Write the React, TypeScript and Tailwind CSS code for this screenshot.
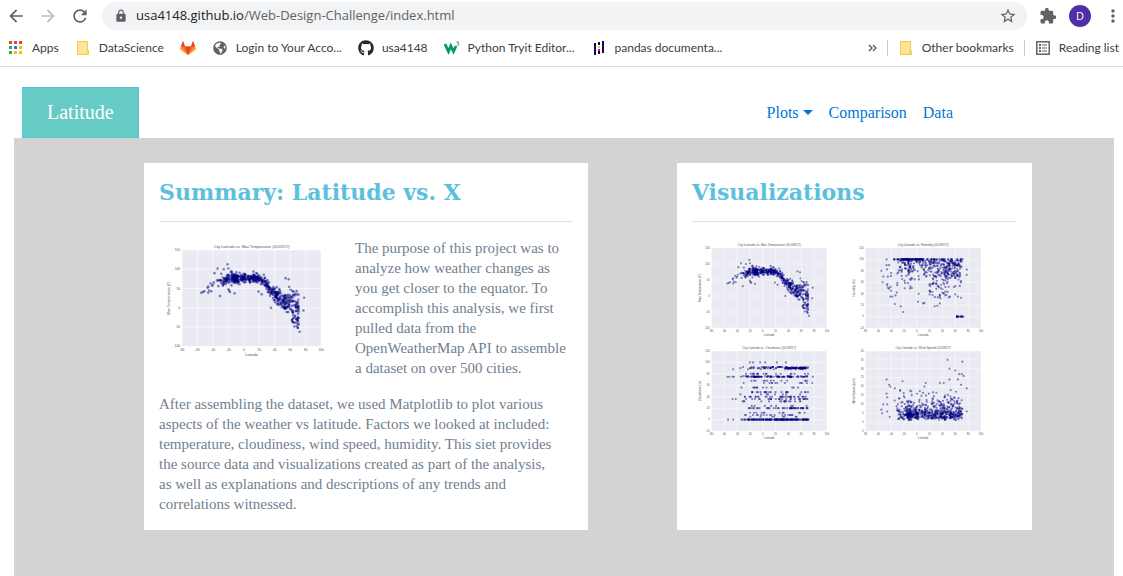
import type { ReactNode } from "react";
import {
  MdArrowBack,
  MdArrowForward,
  MdExtension,
  MdLock,
  MdMoreVert,
  MdRefresh,
  MdStarBorder,
} from "react-icons/md";
import { FaGithub, FaGlobeAmericas } from "react-icons/fa";

type Point = [number, number];

/* Seeded generator, so every render draws the same scatter. */
function makeRandom(seed: number) {
  let s = seed;
  return () => {
    s = (s + 0x6d2b79f5) | 0;
    let t = Math.imul(s ^ (s >>> 15), 1 | s);
    t = (t + Math.imul(t ^ (t >>> 7), 61 | t)) ^ t;
    return ((t ^ (t >>> 14)) >>> 0) / 4294967296;
  };
}

function makeNormal(rnd: () => number) {
  return () => rnd() + rnd() + rnd() + rnd() + rnd() + rnd() - 3;
}

function latitude(rnd: () => number) {
  const k = rnd();
  if (k < 0.2) return -38 + Math.sqrt(rnd()) * 30;
  if (k < 0.42) return -14 + rnd() * 28;
  if (k < 0.72) return 12 + rnd() * 33;
  return 42 + rnd() * 29;
}

function interpolate(knots: Point[], x: number) {
  for (let i = 1; i < knots.length; i++) {
    const [x0, y0] = knots[i - 1];
    const [x1, y1] = knots[i];
    if (x <= x1) return y0 + ((x - x0) / (x1 - x0)) * (y1 - y0);
  }
  return knots[knots.length - 1][1];
}

function temperatureData(): Point[] {
  const rnd = makeRandom(11);
  const normal = makeNormal(rnd);
  const mean: Point[] = [[-50, 48], [-40, 60], [-30, 69], [-18, 75], [0, 78], [18, 77], [26, 67], [34, 48], [42, 33], [50, 21], [60, 13], [72, 5]];
  const spread: Point[] = [[-50, 10], [-20, 9], [0, 8], [20, 8], [30, 12], [42, 15], [52, 19], [62, 24], [72, 26]];
  const pts: Point[] = [
    [-21, 113], [-34, 102], [-26, 100], [-20, 102], [-38, 90], [-16, 95], [-55, 39], [-53, 41], [-51, 43],
    [-46, 39], [-42, 43], [-46, 55], [-47, 52], [-45, 45], [-31, 31], [-19, 44], [-20, 48], [-18, 41], [-12, 38],
    [54, 77], [58, 74], [78, 26], [77, -7], [35, 0], [63, 43], [19, 42], [23, 35], [66, 37], [72, -62],
    [-43, 63], [-41, 57], [-40, 60], [-39, 66],
  ];
  for (let i = 0; i < 520; i++) {
    const x = latitude(rnd);
    pts.push([x, interpolate(mean, x) + normal() * interpolate(spread, x)]);
  }
  for (let i = 0; i < 24; i++) pts.push([62 + rnd() * 9, -20 - rnd() * 32]);
  return pts;
}

function humidityData(): Point[] {
  const rnd = makeRandom(23);
  const pts: Point[] = [
    [-47, 100], [-55, 80], [-52, 70], [-53, 60], [-46, 57], [-45, 70], [-40, 45], [-41, 35], [-38, 35], [-34, 22],
    [-25, 18], [-21, 8], [2, 26], [3, 40], [10, 23], [12, 24], [28, 18], [32, 19], [36, 23], [60, 39], [64, 35],
    [69, 33], [78, 82], [78, 73], [-47, 90], [-43, 90], [-31, 42], [-33, 37],
  ];
  for (let i = 0; i < 130; i++) pts.push([i < 70 ? -24 + rnd() * 34 : -37 + rnd() * 109, 100]);
  for (let i = 0; i < 220; i++) pts.push([latitude(rnd), 98 - rnd() * rnd() * 50]);
  for (let i = 0; i < 75; i++) pts.push([44 + rnd() * 24, 94 - rnd() * 27]);
  for (let i = 0; i < 65; i++) pts.push([18 + rnd() * 34, 88 - rnd() * 56]);
  for (let i = 0; i < 24; i++) pts.push([-47 + rnd() * 45, 85 - rnd() * 38]);
  for (let i = 0; i < 16; i++) pts.push([62 + rnd() * 11, 0]);
  return pts;
}

function cloudinessData(): Point[] {
  const rnd = makeRandom(37);
  const bands: Point[] = [
    [0, 120], [5, 8], [8, 18], [12, 12], [20, 44], [24, 8], [32, 17], [36, 28], [40, 34], [44, 8], [48, 22],
    [56, 12], [64, 12], [68, 13], [75, 80], [76, 20], [80, 18], [88, 10], [90, 32], [92, 34],
  ];
  const pts: Point[] = [
    [-55, 75], [-52, 75], [-46, 88], [-47, 75], [-45, 75], [-47, 36], [-42, 36], [-54, 0], [-46, 0],
    [-20, 100], [-15, 100], [-4, 100], [4, 100], [22, 100], [36, 100], [78, 75], [77, 64],
  ];
  for (const [y, count] of bands) {
    for (let i = 0; i < count; i++) pts.push([latitude(rnd), y]);
  }
  for (let i = 0; i < 50; i++) pts.push([35 + rnd() * 32, 90]);
  for (let i = 0; i < 50; i++) pts.push([5 + rnd() * 67, 0]);
  return pts;
}

function windData(): Point[] {
  const rnd = makeRandom(53);
  const pts: Point[] = [
    [48, 35], [71, 34], [51, 30], [60, 29], [66, 27], [70, 27], [73, 26], [51, 24], [64, 24], [-47, 24], [-22, 23],
    [-43, 21], [-41, 20], [14, 22], [36, 22], [42, 22], [12, 20], [-34, 19], [-26, 18], [-55, 7], [-54, 5], [-52, 10],
    [-46, 10], [-46, 6], [-42, 3], [-47, 16], [-46, 14], [78, 19], [78, 6], [69, 21], [53, 18],
  ];
  for (let i = 0; i < 500; i++) {
    const y = 1 + rnd() * 3 - Math.log(1 - rnd() * 0.97) * 4.4;
    pts.push([latitude(rnd), y]);
  }
  for (let i = 0; i < 110; i++) pts.push([i % 2 ? -16 + rnd() * 18 : 16 + rnd() * 52, 2 + rnd() * 4]);
  return pts;
}

interface ChartProps {
  title: string;
  yLabel: string;
  yMin: number;
  yMax: number;
  yStep: number;
  points: Point[];
  className: string;
}

const LEFT = 115;
const RIGHT = 811;
const TOP = 60;
const BOTTOM = 542;

function ScatterChart({ title, yLabel, yMin, yMax, yStep, points, className }: ChartProps) {
  const px = (lat: number) => LEFT + ((lat + 80) / 180) * (RIGHT - LEFT);
  const py = (v: number) => BOTTOM - ((v - yMin) / (yMax - yMin)) * (BOTTOM - TOP);
  const xTicks = Array.from({ length: 10 }, (_, i) => -80 + i * 20);
  const yTicks = Array.from({ length: (yMax - yMin) / yStep + 1 }, (_, i) => yMin + i * yStep);
  return (
    <svg viewBox="0 0 900 620" className={className} role="img" aria-label={title} fontFamily="Liberation Sans, Arial, sans-serif" fill="#555">
      <rect x={LEFT} y={TOP} width={RIGHT - LEFT} height={BOTTOM - TOP} fill="#eaeaf2" />
      {xTicks.map((t) => (
        <g key={t}>
          <line x1={px(t)} x2={px(t)} y1={TOP} y2={BOTTOM} stroke="#fff" strokeWidth="3" />
          <text x={px(t)} y="564" fontSize="16" textAnchor="middle">{t}</text>
        </g>
      ))}
      {yTicks.map((t) => (
        <g key={t}>
          <line x1={LEFT} x2={RIGHT} y1={py(t)} y2={py(t)} stroke="#fff" strokeWidth="3" />
          <text x="105" y={py(t) + 5} fontSize="16" textAnchor="end">{t}</text>
        </g>
      ))}
      <text x="463" y="50" fontSize="19" textAnchor="middle">{title}</text>
      <text x="463" y="590" fontSize="18" textAnchor="middle">Latitude</text>
      <text x="0" y="0" fontSize="18" textAnchor="middle" transform="translate(54 301) rotate(-90)">{yLabel}</text>
      {points.map(([x, y], i) => (
        <circle key={i} cx={px(x)} cy={py(y)} r="6.5" fill="#000080" fillOpacity="0.48" />
      ))}
    </svg>
  );
}

const temperature = { title: "City Latitude vs. Max Temperature (01/09/17)", yLabel: "Max Temperature (F)", yMin: -100, yMax: 150, yStep: 50, points: temperatureData() };
const humidity = { title: "City Latitude vs. Humidity (01/09/17)", yLabel: "Humidity (%)", yMin: -20, yMax: 120, yStep: 20, points: humidityData() };
const cloudiness = { title: "City Latitude vs. Cloudiness (01/09/17)", yLabel: "Cloudiness (%)", yMin: -20, yMax: 120, yStep: 20, points: cloudinessData() };
const wind = { title: "City Latitude vs. Wind Speed (01/09/17)", yLabel: "Wind Speed (mph)", yMin: -5, yMax: 40, yStep: 5, points: windData() };

function AppsIcon() {
  const colors = ["#ea4335", "#ea4335", "#ea4335", "#34a853", "#1a73e8", "#fbbc04", "#34a853", "#fbbc04", "#fbbc04"];
  return (
    <svg viewBox="0 0 16 16" className="size-4">
      {colors.map((c, i) => (
        <rect key={i} x={1 + (i % 3) * 5} y={1 + Math.floor(i / 3) * 5} width="3" height="3" fill={c} />
      ))}
    </svg>
  );
}

function FolderIcon() {
  return (
    <svg viewBox="0 0 16 16" className="size-4">
      <path d="M2.5 1.5h10v9h1v4h-11z" fill="#ffe694" stroke="#f0c94d" />
      <rect x="11.5" y="10.5" width="2" height="4" rx="1" fill="#ffe694" stroke="#f0c94d" />
    </svg>
  );
}

function GitlabIcon() {
  return (
    <svg viewBox="0 0 16 16" className="size-4">
      <path d="M8 15 .6 9.500c-.4-.3-.5-.7-.3-1.100L3 1l2 5.500h6L13 1l2.700 7.400c.2.4.1.8-.3 1.100z" fill="#fc6d26" />
      <path d="M8 15 5 6.500h6z" fill="#e24329" />
      <path d="M8 15 .6 9.500c-.4-.3-.5-.7-.3-1.100L1 6.500zM8 15l7.400-5.500c.4-.3.5-.7.3-1.100L15 6.500z" fill="#fca326" />
      <path d="M1 6.500 3 1l2 5.500zM15 6.500 13 1l-2 5.500z" fill="#e24329" />
    </svg>
  );
}

function W3Icon() {
  return (
    <svg viewBox="0 0 16 16" className="size-4" fill="none" stroke="#059862">
      <path d="M1 4 4.500 11.500 6.800 6 9.500 11.500 12 6" strokeWidth="2.800" />
      <path d="M12.500 2h2.500L13.800 3.600c1.600 0 1.600 2.200-1 1.800" strokeWidth=".8" />
    </svg>
  );
}

function PandasIcon() {
  return (
    <svg viewBox="0 0 16 16" className="size-4" fill="#150458">
      <path d="M3 3h2v12H3zM11 1h2v12h-2zM7 2h2v3H7zM7 11h2v3H7z" />
      <rect x="7" y="6" width="2" height="2" fill="#ffca00" />
      <rect x="7" y="9" width="2" height="2" fill="#e70488" />
    </svg>
  );
}

function ReadingListIcon() {
  return (
    <svg viewBox="0 0 16 16" className="size-4" fill="#5f6368">
      <rect x="1.75" y="1.75" width="12.5" height="12.5" fill="none" stroke="#5f6368" strokeWidth="1.5" />
      <path d="M4 4h2v2H4zM4 7h2v2H4zM4 10h2v2H4zM7 4.500h5v1H7zM7 7.500h5v1H7zM7 10.500h5v1H7z" />
    </svg>
  );
}

function Bookmark({ icon, children, label }: { icon: ReactNode; children?: ReactNode; label?: string }) {
  return (
    <a href="#" aria-label={label} className="flex shrink-0 items-center gap-2 whitespace-nowrap">
      <span className="flex size-4 items-center justify-center text-[#5f6368]">{icon}</span>
      {children}
    </a>
  );
}

function BrowserChrome() {
  return (
    <header className="border-b border-[#dadce0] bg-white font-['Open_Sans',sans-serif] text-[#3c4043]">
      <div className="flex h-8 items-center pl-1.5 text-[#5f6368]">
        <button aria-label="Back" className="mr-3"><MdArrowBack className="size-5" /></button>
        <button aria-label="Forward" className="mr-3 text-[#babcbe]"><MdArrowForward className="size-5" /></button>
        <button aria-label="Reload" className="mr-3"><MdRefresh className="size-5" /></button>
        <div className="flex h-7 flex-1 items-center rounded-full bg-[#f1f3f4] pr-2.5 pl-3">
          <MdLock className="mr-2 size-3.5 shrink-0" />
          <div className="flex-1 text-[13px]">
            <span className="text-[#202124]">usa4148.github.io</span>/Web-Design-Challenge/index.html
          </div>
          <button aria-label="Bookmark this page"><MdStarBorder className="size-4.5" /></button>
        </div>
        <button aria-label="Extensions" className="ml-3"><MdExtension className="size-4.5" /></button>
        <button aria-label="Profile" className="ml-3 size-5.5 rounded-full bg-[#512da8] text-[11px] text-white">D</button>
        <button aria-label="Menu" className="ml-3"><MdMoreVert className="size-5" /></button>
      </div>
      <div className="flex h-8.5 items-center overflow-hidden pb-0.5 pl-2 font-['Lato',sans-serif] text-[12px]">
        <div className="flex flex-1 items-center gap-4">
          <Bookmark icon={<AppsIcon />}>Apps</Bookmark>
          <Bookmark icon={<FolderIcon />}>DataScience</Bookmark>
          <Bookmark icon={<GitlabIcon />} label="GitLab" />
          <Bookmark icon={<FaGlobeAmericas className="size-3.5" />}>Login to Your Acco...</Bookmark>
          <Bookmark icon={<FaGithub className="size-4 text-[#24292e]" />}>usa4148</Bookmark>
          <Bookmark icon={<W3Icon />}>Python Tryit Editor...</Bookmark>
          <Bookmark icon={<PandasIcon />}>pandas documenta...</Bookmark>
        </div>
        <button aria-label="More bookmarks" className="mr-2.5">
          <svg viewBox="0 0 9 8" className="h-2 w-[9px]" fill="none" stroke="#5f6368" strokeWidth="1.5"><path d="M1 1l3 3-3 3M5 1l3 3-3 3" /></svg>
        </button>
        <div className="flex items-center gap-2.5">
          <span className="h-4 w-px bg-[#c8cacc]" />
          <Bookmark icon={<FolderIcon />}>Other bookmarks</Bookmark>
          <span className="h-4 w-px bg-[#c8cacc]" />
          <Bookmark icon={<ReadingListIcon />}>Reading list</Bookmark>
        </div>
        <span className="w-1" />
      </div>
    </header>
  );
}

export default function App() {
  return (
    <div className="flex min-h-screen flex-col bg-white font-['Liberation_Serif',serif]">
      <BrowserChrome />
      <nav className="flex items-center justify-between pt-5 pr-[170px] pl-[22px] text-[16px] leading-6 text-[#0275d8]">
        <a href="#" className="border border-[#5bc0de] bg-[#66cbc4] px-6 py-3 text-[20px] leading-[25px] text-white">Latitude</a>
        <div className="flex items-center gap-4">
          <button className="flex items-center gap-1">
            Plots
            <svg viewBox="0 0 10 5" className="h-[5px] w-2.5 fill-current"><path d="M0 0h10L5 5z" /></svg>
          </button>
          <a href="#">Comparison</a>
          <a href="#">Data</a>
        </div>
      </nav>
      <main className="mr-[9px] ml-[14px] grid flex-1 grid-cols-[5fr_4fr] gap-x-[89px] bg-[#d3d3d3] pt-[25px] pr-[82px] pb-[46px] pl-[130px]">
        <section className="bg-white p-[15px] text-[15px] leading-5 text-[#708090]">
          <h1 className="border-b border-[#e0e0e0] pb-[15px] font-['DejaVu_Serif',serif] text-[22px] leading-7 font-bold text-[#5bc0de]">Summary: Latitude vs. X</h1>
          <div className="mt-4 flex gap-4">
            <ScatterChart {...temperature} className="h-[124px] w-[180px] shrink-0" />
            <p>
              The purpose of this project was to analyze how weather changes as you get closer to the equator. To
              accomplish this analysis, we first pulled data from the OpenWeatherMap API to assemble a dataset on over
              500 cities.
            </p>
          </div>
          <p className="mt-4 pr-4">
            After assembling the dataset, we used Matplotlib to plot various aspects of the weather vs latitude. Factors
            we looked at included: temperature, cloudiness, wind speed, humidity. This siet provides the source data and
            visualizations created as part of the analysis, as well as explanations and descriptions of any trends and
            correlations witnessed.
          </p>
        </section>
        <section className="bg-white p-[15px]">
          <h2 className="border-b border-[#e0e0e0] pb-[15px] font-['DejaVu_Serif',serif] text-[22px] leading-7 font-bold text-[#5bc0de]">Visualizations</h2>
          <div className="mt-4 flex flex-wrap gap-x-1">
            <ScatterChart {...temperature} className="h-[103px] w-[150px]" />
            <ScatterChart {...humidity} className="h-[103px] w-[150px]" />
            <ScatterChart {...cloudiness} className="h-[103px] w-[150px]" />
            <ScatterChart {...wind} className="h-[103px] w-[150px]" />
          </div>
        </section>
      </main>
    </div>
  );
}
